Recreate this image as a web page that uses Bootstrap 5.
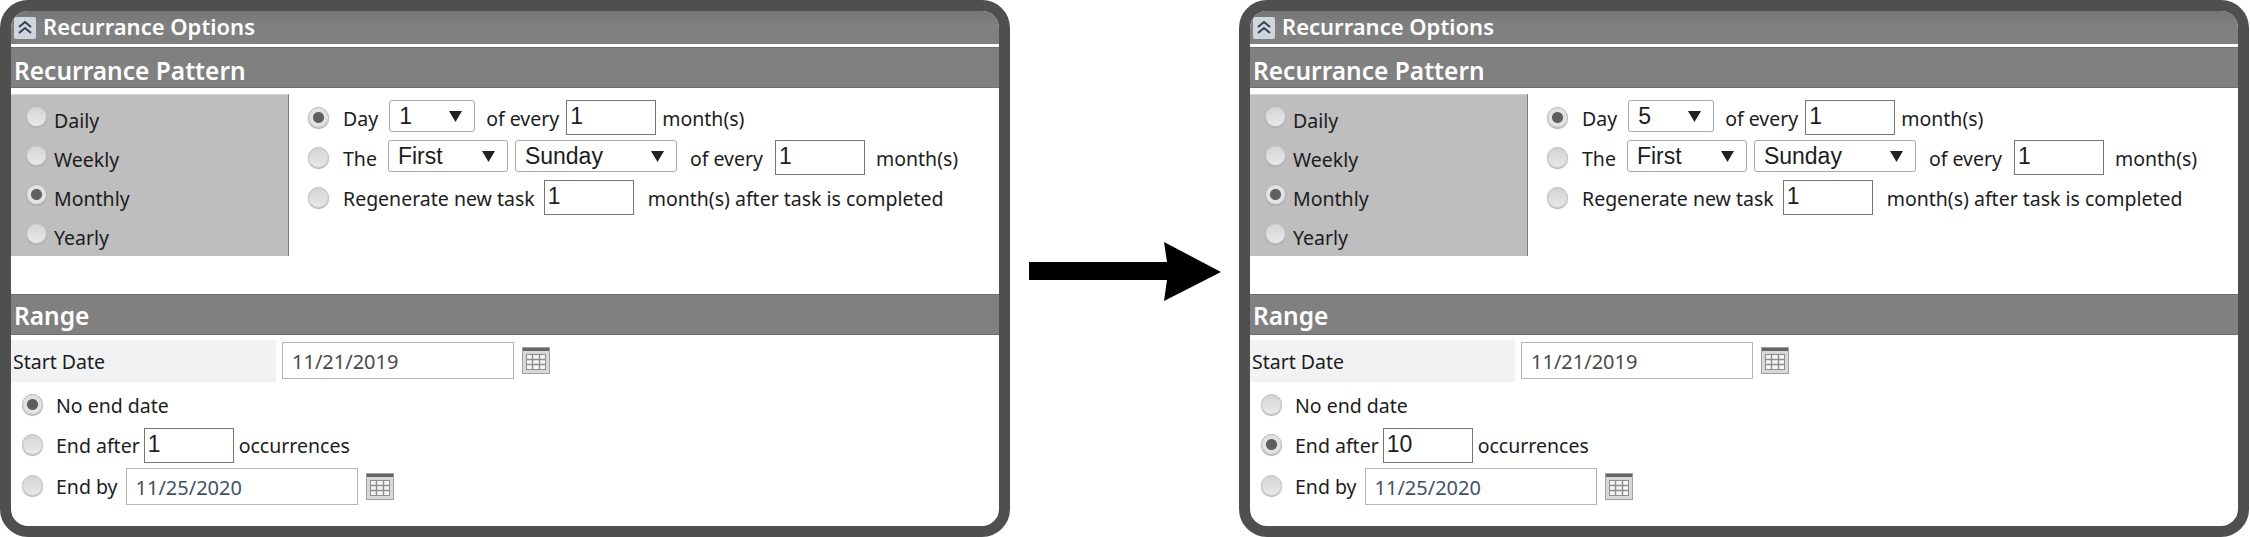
<!DOCTYPE html>
<html lang="en">
<head>
    <meta charset="UTF-8">
    <title>Recurrance Options</title>
    <link href="https://cdn.jsdelivr.net/npm/bootstrap@5.3.0/dist/css/bootstrap.min.css" rel="stylesheet">
    <style>
        body { background: #fff; color: #1c1c1c; font-family: "Noto Sans", "Open Sans", sans-serif; font-size: 19.5px; }
        .screen { width: 2250px; height: 537px; }
        .rec-panel { width: 1010px; height: 537px; border: 11px solid #4f4f4f; border-radius: 28px; overflow: hidden; background: #fff; flex: none; }
        .arrow-gap { width: 229px; flex: none; padding-top: 242px; }
        .title-bar { height: 36px; border-bottom: 3px solid #fff; background: linear-gradient(#747474, #808080 40%); color: #fff; font-weight: 600; font-size: 22px; padding-left: 3px; gap: 7px; }
        .title-text { padding-bottom: 2px; }
        .sec-head { height: 41px; background: #808080; border-top: 1px solid #6e6e6e; border-bottom: 1px solid #6e6e6e; color: #fff; font-weight: 600; font-size: 24.5px; padding: 8px 0 0 3px; }
        .sec-range { padding-top: 4px; }
        .pattern-box { height: 162px; margin-top: 6px; margin-bottom: 38px; }
        .freq-list { width: 278px; background: #bebebe; border-top: 1px solid #d0d0d0; border-right: 1px solid #7a7a7a; padding: 11px 0 0 15px; }
        .freq-row { height: 39px; gap: 7px; }
        .freq-row label { line-height: 30px; }
        .pattern-opts { padding: 6px 0 0 19px; }
        .opt-row { margin-bottom: 5px; height: 35px; }
        .opt-row > span { padding-top: 2px; }
        .opt-row .opt-radio { margin: -3px 14px 0 0; }
        .opt-radio.form-check-input { width: 21px; height: 21px; flex: none; margin-top: 0; border: 1px solid #bdbdbd; background: linear-gradient(#d4d4d4, #e8e8e8); box-shadow: 0 1px 1px #a8a8a8; }
        .opt-radio.form-check-input:checked { background: radial-gradient(circle, #5f5f5f 0 5px, #e2e2e2 6px); border-color: #b5b5b5; }
        .sel-box.form-select { height: 32px; align-self: flex-start; padding: 0 0 0 9px; border: 1px solid #a9a9a9; border-radius: 3px; font-family: "Liberation Sans", Arial, sans-serif; font-size: 23px; line-height: 28px; color: #1c1c1c; background-position: right 12px center; background-size: 13px 11px; background-image: url("data:image/svg+xml,%3csvg xmlns='http://www.w3.org/2000/svg' viewBox='0 0 13 11'%3e%3cpath fill='%23222' d='M0 0h13L6.5 11z'/%3e%3c/svg%3e"); }
        .sel-day.form-select { width: 86px; margin: 0 11px 0 11px; }
        .sel-nth.form-select { width: 120px; margin: 0 7px 0 11px; }
        .sel-week.form-select { width: 162px; margin-right: 13px; }
        .num-box.form-control { width: 90px; height: 35px; padding: 0 0 3px 3px; border: 1px solid #767676; border-radius: 0; font-family: "Liberation Sans", Arial, sans-serif; font-size: 23px; color: #1c1c1c; }
        .date-box.form-control { width: 232px; height: 37px; padding: 2px 9px 0; border: 1px solid #b5b5b5; border-radius: 0; font-size: 20px; color: #4a4a4a; }
        .date-end.form-control { color: #44525e; }
        .gap-every { margin-right: 7px; }
        .gap-every-wide { margin-right: 12px; }
        .gap-task { margin-right: 9px; }
        .gap-unit { margin-left: 6px; }
        .gap-unit-wide { margin-left: 11px; }
        .gap-done { margin-left: 14px; }
        .gap-occ { margin-left: 5px; }
        .start-row { margin-top: 5px; height: 41px; margin-bottom: 7px; }
        .start-label { width: 265px; background: #f1f2f4; line-height: 41px; padding: 1px 0 0 2px; margin-right: 6px; }
        .end-opts { padding-left: 11px; }
        .end-row { margin-bottom: 5px; height: 35px; }
        .end-row.row-tall { height: 37px; }
        .end-row .opt-radio { margin: -3px 13px 0 0; }
        .cal-icon { flex: none; margin-left: 8px; }
    </style>
</head>
<body class="m-0">
    <div id="screen" class="screen d-flex"></div>

    <script src="https://cdn.jsdelivr.net/npm/bootstrap@5.3.0/dist/js/bootstrap.bundle.min.js"></script>
    <script>
        // only these values differ between the two panels
        const panels = [
            { id: 'a', day: '1', endMode: 'none', endAfter: '1' },
            { id: 'b', day: '5', endMode: 'after', endAfter: '10' }
        ];

        const calIcon = `
            <svg class="cal-icon" width="28" height="27" viewBox="0 0 28 27">
                <rect x="0.5" y="0.5" width="27" height="26" fill="#d8d8d8" stroke="#a0a0a0"/>
                <rect x="1" y="1" width="26" height="3" fill="#666"/>
                <rect x="4.5" y="7.5" width="19" height="15" fill="#f4f4f4" stroke="#8e8e8e"/>
                <path d="M10.5 8v14M17.5 8v14M5 12.5h18M5 17.5h18" stroke="#8e8e8e" stroke-width="1.4" fill="none"/>
            </svg>`;

        function radio(name, value, checked) {
            return `<input class="form-check-input opt-radio" type="radio" name="${name}" value="${value}" ${checked ? 'checked' : ''}>`;
        }

        function renderPanel(p) {
            const freq = ['Daily', 'Weekly', 'Monthly', 'Yearly'].map(f => `
                <div class="freq-row d-flex align-items-start">
                    ${radio('freq' + p.id, f, f === 'Monthly')}
                    <label>${f}</label>
                </div>`).join('');

            return `
            <div class="rec-panel">
                <div class="title-bar d-flex align-items-center">
                    <svg width="22" height="22" viewBox="0 0 22 22">
                        <rect width="22" height="22" rx="2" fill="#cfd6de"/>
                        <path d="M5 10l6-5 6 5M5 16l6-5 6 5" stroke="#3a3f52" stroke-width="2" fill="none"/>
                    </svg>
                    <span class="title-text">Recurrance Options</span>
                </div>
                <div class="sec-head d-flex align-items-center">Recurrance Pattern</div>
                <div class="pattern-box d-flex">
                    <div class="freq-list">${freq}</div>
                    <div class="pattern-opts">
                        <div class="opt-row d-flex align-items-center">
                            ${radio('mode' + p.id, 'day', true)}
                            <span>Day</span>
                            <select class="form-select sel-box sel-day"><option>${p.day}</option></select>
                            <span class="gap-every">of every</span>
                            <input class="form-control num-box" value="1">
                            <span class="gap-unit">month(s)</span>
                        </div>
                        <div class="opt-row d-flex align-items-center">
                            ${radio('mode' + p.id, 'the', false)}
                            <span>The</span>
                            <select class="form-select sel-box sel-nth"><option>First</option></select>
                            <select class="form-select sel-box sel-week"><option>Sunday</option></select>
                            <span class="gap-every-wide">of every</span>
                            <input class="form-control num-box" value="1">
                            <span class="gap-unit-wide">month(s)</span>
                        </div>
                        <div class="opt-row d-flex align-items-center">
                            ${radio('mode' + p.id, 'regen', false)}
                            <span class="gap-task">Regenerate new task</span>
                            <input class="form-control num-box" value="1">
                            <span class="gap-done">month(s) after task is completed</span>
                        </div>
                    </div>
                </div>
                <div class="sec-head sec-range d-flex align-items-center">Range</div>
                <div class="start-row d-flex align-items-center">
                    <div class="start-label">Start Date</div>
                    <input class="form-control date-box" value="11/21/2019">
                    ${calIcon}
                </div>
                <div class="end-opts">
                    <div class="end-row d-flex align-items-center">
                        ${radio('end' + p.id, 'none', p.endMode === 'none')}
                        <span>No end date</span>
                    </div>
                    <div class="end-row d-flex align-items-center">
                        ${radio('end' + p.id, 'after', p.endMode === 'after')}
                        <span class="me-1">End after</span>
                        <input class="form-control num-box" value="${p.endAfter}">
                        <span class="gap-occ">occurrences</span>
                    </div>
                    <div class="end-row row-tall d-flex align-items-center">
                        ${radio('end' + p.id, 'by', false)}
                        <span class="me-2">End by</span>
                        <input class="form-control date-box date-end" value="11/25/2020">
                        ${calIcon}
                    </div>
                </div>
            </div>`;
        }

        const arrow = `
            <div class="arrow-gap d-flex align-items-start justify-content-center">
                <svg width="192" height="59" viewBox="0 0 192 59">
                    <path d="M0 20h138l-3-20 57 30-57 29 3-21H0z" fill="#000"/>
                </svg>
            </div>`;

        document.getElementById('screen').innerHTML =
            renderPanel(panels[0]) + arrow + renderPanel(panels[1]);
    </script>
</body>
</html>
